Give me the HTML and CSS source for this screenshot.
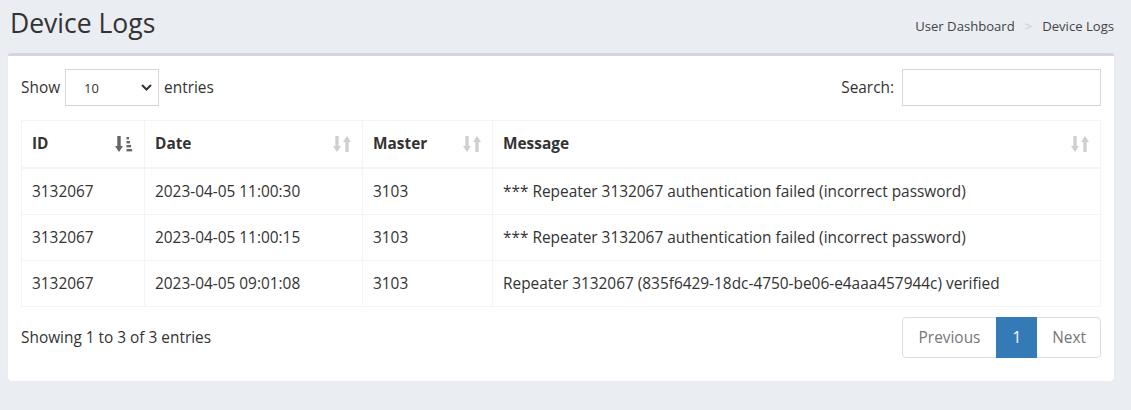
FILE: index.html
```html
<!DOCTYPE html>
<html lang="en">
<head>
<meta charset="utf-8">
<title>Device Logs</title>
<link rel="stylesheet" href="styles.css">
</head>
<body>
<header class="content-header">
  <h1 class="page-title">Device Logs</h1>
  <ol class="breadcrumb">
    <li class="crumb">User Dashboard</li>
    <li class="crumb-sep">&gt;</li>
    <li class="crumb">Device Logs</li>
  </ol>
</header>

<section class="box">
  <div class="dt-top">
    <div class="dt-length">
      <span>Show</span>
      <div class="select">
        <span class="select-value">10</span>
        <svg class="chev" width="11" height="7" viewBox="0 0 11 7"><path d="M1 1l4.5 4.5L10 1" fill="none" stroke="#333" stroke-width="2"/></svg>
      </div>
      <span>entries</span>
    </div>
    <div class="dt-search">
      <span>Search:</span>
      <div class="search-input"></div>
    </div>
  </div>

  <table class="dt-table">
    <colgroup>
      <col class="c-id"><col class="c-date"><col class="c-master"><col class="c-msg">
    </colgroup>
    <thead>
      <tr>
        <th><div class="th-in"><span>ID</span>
          <svg class="sort active" width="18" height="18" viewBox="0 0 18 18"><path d="M2.3 1h3.4v10H8l-4 6-4-6h2.3z"/><rect x="11.5" y="2" width="2.5" height="2.4"/><rect x="11.5" y="6" width="3.5" height="2.4"/><rect x="11.5" y="10" width="4.6" height="2.4"/><rect x="11.5" y="14" width="5.6" height="2.4"/></svg></div></th>
        <th><div class="th-in"><span>Date</span>
          <svg class="sort" width="18" height="18" viewBox="0 0 18 18"><path d="M2.3 1h3.4v10H8l-4 6-4-6h2.3z"/><path d="M12.3 17h3.4V7H18l-4-6-4 6h2.3z"/></svg></div></th>
        <th><div class="th-in"><span>Master</span>
          <svg class="sort" width="18" height="18" viewBox="0 0 18 18"><path d="M2.3 1h3.4v10H8l-4 6-4-6h2.3z"/><path d="M12.3 17h3.4V7H18l-4-6-4 6h2.3z"/></svg></div></th>
        <th><div class="th-in"><span>Message</span>
          <svg class="sort" width="18" height="18" viewBox="0 0 18 18"><path d="M2.3 1h3.4v10H8l-4 6-4-6h2.3z"/><path d="M12.3 17h3.4V7H18l-4-6-4 6h2.3z"/></svg></div></th>
      </tr>
    </thead>
    <tbody>
      <tr><td>3132067</td><td>2023-04-05 11:00:30</td><td>3103</td><td>*** Repeater 3132067 authentication failed (incorrect password)</td></tr>
      <tr><td>3132067</td><td>2023-04-05 11:00:15</td><td>3103</td><td>*** Repeater 3132067 authentication failed (incorrect password)</td></tr>
      <tr><td>3132067</td><td>2023-04-05 09:01:08</td><td>3103</td><td>Repeater 3132067 (835f6429-18dc-4750-be06-e4aaa457944c) verified</td></tr>
    </tbody>
  </table>

  <div class="dt-bottom">
    <div class="dt-info">Showing 1 to 3 of 3 entries</div>
    <ul class="pagination">
      <li class="page disabled prev">Previous</li>
      <li class="page active">1</li>
      <li class="page disabled next">Next</li>
    </ul>
  </div>
</section>
</body>
</html>
```
FILE: styles.css
```css
* { box-sizing: border-box; }
html, body { margin: 0; padding: 0; }
body {
  background: #eaedf2;
  font-family: "Open Sans", "Noto Sans", sans-serif;
  font-size: 15.4px;
  color: #333;
}

.content-header {
  display: flex;
  justify-content: space-between;
  align-items: flex-start;
  height: 53px;
  padding: 0 17px 0 10px;
}
.page-title {
  margin: 0;
  padding-top: 5px;
  font-size: 26.5px;
  font-weight: 400;
  line-height: 36px;
  color: #333;
}
.breadcrumb {
  list-style: none;
  margin: 17px 0 0;
  padding: 0;
  display: flex;
  font-size: 13.1px;
  line-height: 18px;
  color: #444;
}
.crumb-sep { color: #ccc; padding: 0 10px; }

.box {
  margin: 0 17px 0 8px;
  background: #fff;
  border-top: 3px solid #d2d6de;
  border-radius: 3px;
  box-shadow: 0 1px 1px rgba(0,0,0,0.1);
  padding: 13px 13px 13px;
}

.dt-top {
  display: flex;
  justify-content: space-between;
  align-items: center;
  height: 37px;
  margin-bottom: 14px;
}
.dt-length, .dt-search { display: flex; align-items: center; }
.select {
  width: 94px;
  height: 37px;
  margin: 0 5px 0 5px;
  border: 1px solid #d2d6de;
  display: flex;
  align-items: center;
  justify-content: space-between;
  padding: 0 6px 0 18px;
}
.select-value { font-size: 13px; }
.chev { display: block; }
.search-input {
  width: 199px;
  height: 37px;
  margin-left: 8px;
  border: 1px solid #d2d6de;
}

.dt-table {
  width: 100%;
  border-collapse: collapse;
  table-layout: fixed;
}
.c-id { width: 123px; }
.c-date { width: 218px; }
.c-master { width: 130px; }
.dt-table th, .dt-table td {
  border: 1px solid #f4f4f4;
  padding: 12px 10px;
  line-height: 21px;
  text-align: left;
  white-space: nowrap;
}
.dt-table th {
  font-weight: 700;
  padding-bottom: 13px;
  border-bottom: 2px solid #f4f4f4;
}
.th-in {
  display: flex;
  justify-content: space-between;
  align-items: center;
}
.sort { display: block; fill: #cfcfcf; margin-right: 1px; }
.sort.active { fill: #666; }

.dt-bottom {
  display: flex;
  justify-content: space-between;
  align-items: center;
  margin: 10px 0 10px;
}
.pagination {
  list-style: none;
  margin: 0;
  padding: 0;
  display: flex;
}
.page {
  padding: 9px 15px;
  line-height: 21px;
  border: 1px solid #ddd;
  margin-left: -1px;
  color: #777;
  background: #fff;
}
.page.prev { padding: 9px 16px; border-radius: 4px 0 0 4px; margin-left: 0; }
.page.next { padding: 9px 14px 9px 15px; border-radius: 0 4px 4px 0; }
.page.active {
  background: #337ab7;
  border-color: #337ab7;
  color: #fff;
  position: relative;
}
```
